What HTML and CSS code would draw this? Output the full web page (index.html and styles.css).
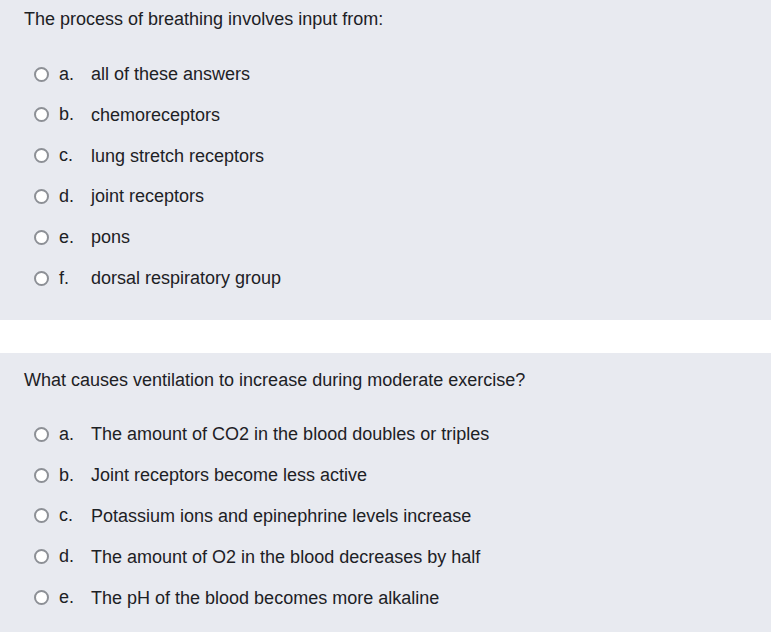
FILE: index.html
```html
<!DOCTYPE html>
<html>
<head>
<meta charset="utf-8">
<link rel="stylesheet" href="styles.css">
</head>
<body>
<div class="panel first">
  <div class="question">The process of breathing involves input from:</div>
  <div class="answers">
    <div class="opt"><span class="radio"></span><span class="letter">a.</span><span class="text">all of these answers</span></div>
    <div class="opt"><span class="radio"></span><span class="letter">b.</span><span class="text">chemoreceptors</span></div>
    <div class="opt"><span class="radio"></span><span class="letter">c.</span><span class="text">lung stretch receptors</span></div>
    <div class="opt"><span class="radio"></span><span class="letter">d.</span><span class="text">joint receptors</span></div>
    <div class="opt"><span class="radio"></span><span class="letter">e.</span><span class="text">pons</span></div>
    <div class="opt"><span class="radio"></span><span class="letter">f.</span><span class="text">dorsal respiratory group</span></div>
  </div>
</div>
<div class="panel second">
  <div class="question">What causes ventilation to increase during moderate exercise?</div>
  <div class="answers">
    <div class="opt"><span class="radio"></span><span class="letter">a.</span><span class="text">The amount of CO2 in the blood doubles or triples</span></div>
    <div class="opt"><span class="radio"></span><span class="letter">b.</span><span class="text">Joint receptors become less active</span></div>
    <div class="opt"><span class="radio"></span><span class="letter">c.</span><span class="text">Potassium ions and epinephrine levels increase</span></div>
    <div class="opt"><span class="radio"></span><span class="letter">d.</span><span class="text">The amount of O2 in the blood decreases by half</span></div>
    <div class="opt"><span class="radio"></span><span class="letter">e.</span><span class="text">The pH of the blood becomes more alkaline</span></div>
  </div>
</div>
</body>
</html>
```
FILE: styles.css
```css
html, body {
  margin: 0;
  padding: 0;
  background: #ffffff;
}
body {
  font-family: "Liberation Sans", Arial, sans-serif;
  font-size: 18px;
  color: #1d2125;
}
.panel {
  background: #e8eaf0;
  padding: 17px 0 23px 24px;
}
.panel.first {
  padding-top: 9.4px;
  padding-bottom: 21.2px;
}
.panel.second {
  margin-top: 33px;
}
.question {
  line-height: 20px;
}
.answers {
  margin-top: 24.3px;
  padding-left: 10px;
}
.opt {
  display: flex;
  align-items: center;
  height: 40.8px;
}
.radio {
  box-sizing: border-box;
  width: 15px;
  height: 15px;
  border: 2px solid #8d9096;
  border-radius: 50%;
  background: #fff;
  flex: none;
}
.letter {
  margin-left: 10px;
  width: 32px;
  flex: none;
}
.text {
  line-height: 20px;
}
```
